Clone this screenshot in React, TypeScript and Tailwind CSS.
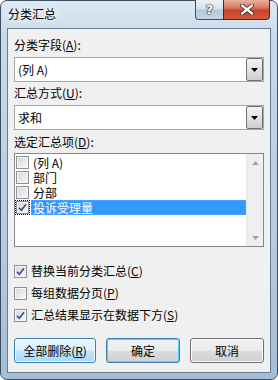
import React from "react";

function Box({ checked }: { checked?: boolean }) {
  return (
    <span className="flex h-[13px] w-[13px] shrink-0 items-center justify-center border border-[#8e8f8f] bg-linear-to-br from-[#d2d5d9] to-[#fbfbfb] shadow-[inset_0_0_0_1px_#f6f6f6]">
      {checked && (
        <svg width="9" height="9" viewBox="0 0 9 9">
          <path d="M1 4.8 L3.4 7.2 L8 1.2" stroke="#3a5595" strokeWidth="1.7" fill="none" />
        </svg>
      )}
    </span>
  );
}

function Arrow({ up, color }: { up?: boolean; color: string }) {
  return (
    <svg width="7" height="4" viewBox="0 0 7 4">
      <polygon points={up ? "0,4 7,4 3.5,0" : "0,0 7,0 3.5,4"} fill={color} />
    </svg>
  );
}

function Combo({ text }: { text: string }) {
  return (
    <div className="flex h-[25px] border border-[#a5a5a5] bg-white">
      <div className="flex flex-1 items-center pl-[3px]">{text}</div>
      <div className="flex w-[17px] items-center justify-center rounded-[2px] border border-[#707070] bg-linear-to-b from-[#f4f4f4] to-[#cfcfcf]">
        <Arrow color="#000" />
      </div>
    </div>
  );
}

function ListRow({ label, checked, selected }: { label: string; checked?: boolean; selected?: boolean }) {
  return (
    <div className="flex h-[15px]">
      <div
        className={
          selected
            ? "flex h-[15px] w-[15px] items-center justify-center border border-dotted border-black"
            : "flex h-[15px] w-[15px] items-center justify-center border border-transparent"
        }
      >
        <Box checked={checked} />
      </div>
      <div
        className={
          selected
            ? "ml-[1px] flex flex-1 items-center border border-dotted border-[#e88a3c] bg-[#3399ff] pl-[1px] leading-[13px] text-white"
            : "ml-[1px] flex flex-1 items-center border border-transparent pl-[1px] leading-[13px]"
        }
      >
        {label}
      </div>
    </div>
  );
}

function CheckRow({ children, checked, mt }: { children: React.ReactNode; checked?: boolean; mt: string }) {
  return (
    <div className={`${mt} flex h-[16px] items-center gap-[4px] leading-[16px]`}>
      <Box checked={checked} />
      <span>{children}</span>
    </div>
  );
}

export default function App() {
  return (
    <div className="h-[380px] w-[278px] font-['Noto_Sans_CJK_SC','Noto_Sans',sans-serif] text-[12px] text-black">
      <div className="flex h-full w-full flex-col rounded-[7px] border border-[#3e4f63] bg-[linear-gradient(180deg,#dde8f4_0%,#c9d9ea_10%,#b8cce2_60%,#a6bdd7_100%)] px-[6px] pb-[6px]">
        <div className="flex h-[27px] shrink-0 items-start">
          <div className="pl-[1px] pt-[5px] leading-[16px] [text-shadow:0_0_5px_#ffffff,0_0_8px_#ffffff]">分类汇总</div>
          <div className="-mt-[1px] ml-auto mr-[1px] flex h-[20px]">
            <div className="flex w-[28px] items-center justify-center rounded-bl-[4px] border border-r-0 border-t-0 border-[#3d4e62] bg-[linear-gradient(180deg,#eef3f8_0%,#d6e1ec_45%,#b7c7d8_55%,#c6d5e4_100%)]">
              <span className="font-['DejaVu_Sans',sans-serif] text-[13px] font-bold leading-[14px] text-white [text-shadow:0_0_1px_#1e2b3a,0_0_1px_#1e2b3a,0_0_2px_#1e2b3a]">
                ?
              </span>
            </div>
            <div className="flex w-[47px] items-center justify-center rounded-br-[4px] border border-t-0 border-[#3d2b28] bg-[linear-gradient(180deg,#eab0a2_0%,#d87a62_40%,#c5432a_55%,#d2593c_100%)]">
              <svg width="14" height="11" viewBox="0 0 14 11">
                <path d="M2 1.5 L12 9.5 M12 1.5 L2 9.5" stroke="#3b1a14" strokeWidth="4" strokeLinecap="round" />
                <path d="M2 1.5 L12 9.5 M12 1.5 L2 9.5" stroke="#ffffff" strokeWidth="2.4" strokeLinecap="round" />
              </svg>
            </div>
          </div>
        </div>
        <div className="flex flex-1 flex-col border border-[#687b90] bg-[#f0f0f0] px-[6px] pt-[8px]">
          <div className="h-[16px] leading-[16px]">
            分类字段(<u>A</u>):
          </div>
          <div className="mt-[4px]">
            <Combo text="(列 A)" />
          </div>
          <div className="mt-[3px] h-[16px] leading-[16px]">
            汇总方式(<u>U</u>):
          </div>
          <div className="mt-[4px]">
            <Combo text="求和" />
          </div>
          <div className="mt-[4px] h-[16px] leading-[16px]">
            选定汇总项(<u>D</u>):
          </div>
          <div className="mt-[3px] flex h-[94px] border border-[#828790] bg-white">
            <div className="flex-1 pt-[1px]">
              <ListRow label="(列 A)" />
              <ListRow label="部门" />
              <ListRow label="分部" />
              <ListRow label="投诉受理量" checked selected />
            </div>
            <div className="flex w-[17px] flex-col justify-between border-l border-[#e6e6e6] bg-[#efefef]">
              <div className="flex h-[17px] items-center justify-center">
                <Arrow up color="#a3a3a3" />
              </div>
              <div className="flex h-[17px] items-center justify-center">
                <Arrow color="#a3a3a3" />
              </div>
            </div>
          </div>
          <CheckRow checked mt="mt-[16px]">
            替换当前分类汇总(<u>C</u>)
          </CheckRow>
          <CheckRow mt="mt-[6px]">
            每组数据分页(<u>P</u>)
          </CheckRow>
          <CheckRow checked mt="mt-[6px]">
            汇总结果显示在数据下方(<u>S</u>)
          </CheckRow>
          <div className="mt-[15px] flex h-[25px] gap-[10px]">
            <div className="flex w-[82px] items-center justify-center rounded-[3px] border border-[#3c7fb1] bg-[linear-gradient(180deg,#eaf6fd_0%,#d9f0fc_50%,#bee6fd_50%,#a7d9f5_100%)] shadow-[inset_0_0_0_1px_#f4fbff]">
              全部删除(<u>R</u>)
            </div>
            <div className="flex w-[74px] items-center justify-center rounded-[3px] border border-[#3c7fb1] bg-[linear-gradient(180deg,#f2f2f2_0%,#ebebeb_50%,#dddddd_50%,#cfcfcf_100%)] shadow-[inset_0_0_0_1px_#48d8fb]">
              确定
            </div>
            <div className="flex w-[74px] items-center justify-center rounded-[3px] border border-[#707070] bg-[linear-gradient(180deg,#f2f2f2_0%,#ebebeb_50%,#dddddd_50%,#cfcfcf_100%)] shadow-[inset_0_0_0_1px_#fcfcfc]">
              取消
            </div>
          </div>
        </div>
      </div>
    </div>
  );
}
